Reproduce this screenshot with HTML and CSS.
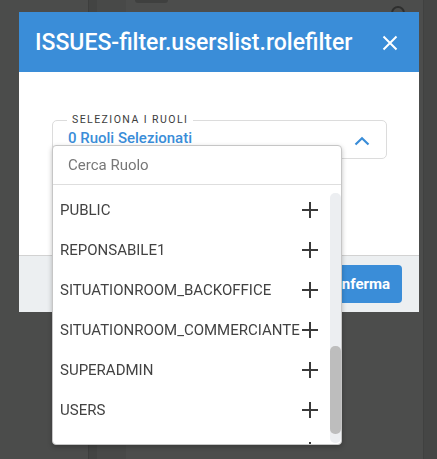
FILE: index.html
```html
<!DOCTYPE html>
<html lang="it">
<head>
<meta charset="utf-8">
<title>Role filter</title>
<link rel="stylesheet" href="styles.css">
</head>
<body>
<div class="app">
  <div class="col col-a"></div>
  <div class="col col-b"></div>
  <div class="col col-c"></div>
  <div class="col col-d">
    <div class="chip"></div>
    <div class="ring"></div>
  </div>
  <div class="col col-e"></div>
</div>

<div class="modal">
  <div class="modal-header">
    <h1 class="modal-title">ISSUES-filter.userslist.rolefilter</h1>
    <svg class="close" width="16" height="16" viewBox="0 0 16 16"><path d="M1.5 1.5 L14.5 14.5 M14.5 1.5 L1.5 14.5" stroke="#fff" stroke-width="2" fill="none"/></svg>
  </div>
  <div class="modal-body">
    <div class="field">
      <span class="field-label">SELEZIONA I RUOLI</span>
      <span class="field-value">0 Ruoli Selezionati</span>
      <svg class="chevron" width="16" height="10" viewBox="0 0 16 10"><path d="M1.5 8.5 L8 2.2 L14.5 8.5" stroke="#3a8dd8" stroke-width="2.2" fill="none"/></svg>
      <div class="dropdown">
        <div class="search">Cerca Ruolo</div>
        <div class="list-wrap">
          <ul class="list">
            <li class="item"><span>PUBLIC</span><svg class="plus" width="18" height="18" viewBox="0 0 18 18"><path d="M9 1 V17 M1 9 H17" stroke="#3a3a3a" stroke-width="2" fill="none"/></svg></li>
            <li class="item"><span>REPONSABILE1</span><svg class="plus" width="18" height="18" viewBox="0 0 18 18"><path d="M9 1 V17 M1 9 H17" stroke="#3a3a3a" stroke-width="2" fill="none"/></svg></li>
            <li class="item"><span>SITUATIONROOM_BACKOFFICE</span><svg class="plus" width="18" height="18" viewBox="0 0 18 18"><path d="M9 1 V17 M1 9 H17" stroke="#3a3a3a" stroke-width="2" fill="none"/></svg></li>
            <li class="item"><span>SITUATIONROOM_COMMERCIANTE</span><svg class="plus" width="18" height="18" viewBox="0 0 18 18"><path d="M9 1 V17 M1 9 H17" stroke="#3a3a3a" stroke-width="2" fill="none"/></svg></li>
            <li class="item"><span>SUPERADMIN</span><svg class="plus" width="18" height="18" viewBox="0 0 18 18"><path d="M9 1 V17 M1 9 H17" stroke="#3a3a3a" stroke-width="2" fill="none"/></svg></li>
            <li class="item"><span>USERS</span><svg class="plus" width="18" height="18" viewBox="0 0 18 18"><path d="M9 1 V17 M1 9 H17" stroke="#3a3a3a" stroke-width="2" fill="none"/></svg></li>
            <li class="item"><span></span><svg class="plus" width="18" height="18" viewBox="0 0 18 18"><path d="M9 1 V17 M1 9 H17" stroke="#3a3a3a" stroke-width="2" fill="none"/></svg></li>
          </ul>
          <div class="scrollbar"><div class="thumb"></div></div>
        </div>
      </div>
    </div>
  </div>
  <div class="modal-footer">
    <button class="confirm">Conferma</button>
  </div>
</div>
</body>
</html>
```

FILE: styles.css
```css
* { box-sizing: border-box; }
html, body { margin: 0; padding: 0; }
body {
  width: 437px;
  height: 459px;
  overflow: hidden;
  font-family: Roboto, "Liberation Sans", Arial, sans-serif;
  background: #4a4b4a;
}
.app {
  display: flex;
  height: 459px;
}
.col { height: 100%; }
.col-a { width: 88px; background: #4b4c4b; }
.col-b { width: 9px; background: #434443; border-left: 1px solid #3d3e3d; }
.col-c { width: 29px; background: #484948; }
.col-d { width: 297px; background: #4c4d4c; position: relative; }
.col-e { flex: 1; background: #454645; border-left: 1px solid #404140; }
.chip {
  position: absolute;
  left: 9px; top: -4px;
  width: 33px; height: 7px;
  border-radius: 3px;
  background: #3f403f;
}
.ring {
  position: absolute;
  left: 265px; top: 6px;
  width: 14px; height: 14px;
  border: 2px solid #2e2f2e;
  border-radius: 50%;
}

.modal {
  position: fixed;
  left: 19px; top: 12px;
  width: 400px; height: 300px;
  background: #fff;
  display: flex;
  flex-direction: column;
}
.modal-header {
  height: 60px;
  background: #3a8dd8;
  display: flex;
  align-items: center;
  justify-content: space-between;
  padding: 0 21px 0 16px;
}
.modal-title {
  margin: 0;
  color: #fff;
  font-size: 23px;
  font-weight: 500;
  letter-spacing: 0;
  line-height: 1;
  padding-top: 1px;
}
.close { display: block; margin-top: 1px; }

.modal-body {
  flex: 1;
  padding: 48px 32px 0 33px;
}
.field {
  position: relative;
  height: 39px;
  border: 1px solid #dcdcdc;
  border-radius: 5px;
  padding: 0 16px 0 15px;
  display: flex;
  align-items: center;
  justify-content: space-between;
}
.field-label {
  position: absolute;
  left: 14px; top: -8px;
  background: #fff;
  padding: 0 5px;
  font-size: 10.5px;
  letter-spacing: 1.45px;
  color: #3c3c3c;
  line-height: 14px;
}
.field-value {
  color: #3a8dd8;
  font-size: 15px;
  font-weight: 500;
  margin-top: -3px;
}
.chevron { display: block; margin-top: 3px; }

.dropdown {
  position: absolute;
  left: -1px; top: 24px;
  width: 290px; height: 300px;
  background: #fff;
  border: 1px solid #c6c6c6;
  border-radius: 4px;
  box-shadow: 0 2px 5px rgba(0,0,0,0.25);
  display: flex;
  flex-direction: column;
  z-index: 5;
}
.search {
  height: 39px;
  flex: none;
  border-bottom: 1px solid #dedede;
  padding-left: 15px;
  display: flex;
  align-items: center;
  font-size: 15px;
  color: #777;
}
.list-wrap {
  flex: 1;
  display: flex;
  overflow: hidden;
}
.list {
  flex: 1;
  list-style: none;
  margin: 0;
  padding: 5px 0 0 7px;
  overflow: hidden;
}
.item {
  height: 40px;
  display: flex;
  align-items: center;
  justify-content: space-between;
  padding-right: 11px;
  font-size: 15px;
  color: #424242;
}
.plus { display: block; flex: none; }
.scrollbar {
  width: 11px;
  margin: 8px 0 1px;
  background: #eceef1;
  border-radius: 5px;
  display: flex;
  flex-direction: column;
  justify-content: flex-end;
  padding-bottom: 9px;
}
.thumb {
  height: 88px;
  background: #bdbdbd;
  border-radius: 5px;
}

.modal-footer {
  height: 57px;
  border-top: 1px solid #d2d2d2;
  background: #eceff1;
  display: flex;
  justify-content: flex-end;
  align-items: flex-start;
  padding: 9px 17px 0 0;
}
.confirm {
  height: 38px;
  border: none;
  border-radius: 4px;
  background: #3a8dd8;
  color: #fff;
  font-family: Roboto, "Liberation Sans", Arial, sans-serif;
  font-size: 15px;
  font-weight: 700;
  padding: 0 12px;
}
```
